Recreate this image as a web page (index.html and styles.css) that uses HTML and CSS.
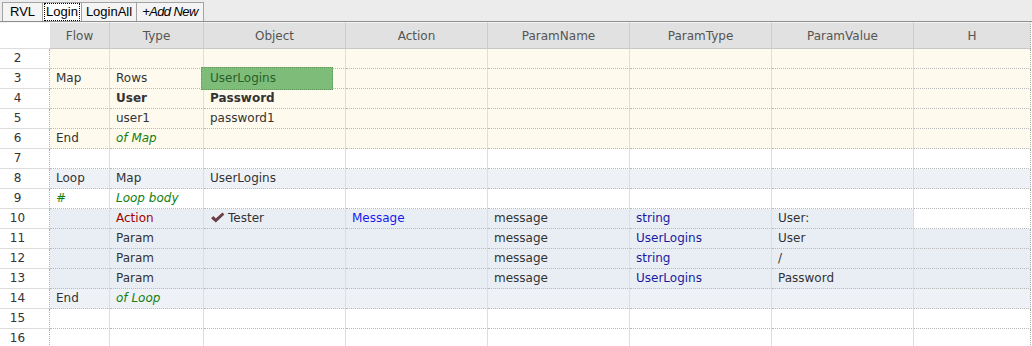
FILE: index.html
```html
<!DOCTYPE html>
<html lang="en">
<head>
    <meta charset="UTF-8">
    <title>Login</title>
    <link rel="stylesheet" href="styles.css">
</head>
<body>
    <div class="tabs">
        <span class="tab">RVL</span>
        <span class="tab active"><span class="focus">Login</span></span>
        <span class="tab">LoginAll</span>
        <span class="tab add">+Add New</span>
    </div>
    <table class="grid">
        <colgroup>
            <col style="width:50px">
            <col style="width:60px">
            <col style="width:94px">
            <col style="width:142px">
            <col style="width:142px">
            <col style="width:142px">
            <col style="width:142px">
            <col style="width:142px">
            <col>
        </colgroup>
        <thead>
            <tr>
                <th class="corner"></th>
                <th>Flow</th>
                <th>Type</th>
                <th>Object</th>
                <th>Action</th>
                <th>ParamName</th>
                <th>ParamType</th>
                <th>ParamValue</th>
                <th>H</th>
            </tr>
        </thead>
        <tbody>
            <tr class="map">
                <td class="num">2</td><td></td><td></td><td></td><td></td><td></td><td></td><td></td><td></td>
            </tr>
            <tr class="map">
                <td class="num">3</td><td>Map</td><td>Rows</td>
                <td class="picked"><div class="highlight"></div><span class="hl-text">UserLogins</span></td>
                <td></td><td></td><td></td><td></td><td></td>
            </tr>
            <tr class="map">
                <td class="num">4</td><td></td><td class="bold">User</td><td class="bold">Password</td><td></td><td></td><td></td><td></td><td></td>
            </tr>
            <tr class="map">
                <td class="num">5</td><td></td><td>user1</td><td>password1</td><td></td><td></td><td></td><td></td><td></td>
            </tr>
            <tr class="map">
                <td class="num">6</td><td>End</td><td class="note">of Map</td><td></td><td></td><td></td><td></td><td></td><td></td>
            </tr>
            <tr>
                <td class="num">7</td><td></td><td></td><td></td><td></td><td></td><td></td><td></td><td></td>
            </tr>
            <tr class="loop">
                <td class="num">8</td><td>Loop</td><td>Map</td><td>UserLogins</td><td></td><td></td><td></td><td></td><td></td>
            </tr>
            <tr>
                <td class="num">9</td><td class="note">#</td><td class="note">Loop body</td><td></td><td></td><td></td><td></td><td></td><td></td>
            </tr>
            <tr class="step">
                <td class="num">10</td><td></td><td class="act">Action</td>
                <td><svg class="check" width="15" height="11" viewBox="0 0 15 11"><path d="M1 6.2 L3.4 4 L5.8 6.6 L12.4 0.6 L14.4 2.6 L5.8 10.4 Z" fill="#6b3d44"/></svg>Tester</td>
                <td class="link">Message</td><td>message</td><td class="type">string</td><td>User:</td><td class="blank"></td>
            </tr>
            <tr class="step">
                <td class="num">11</td><td></td><td>Param</td><td></td><td></td><td>message</td><td class="type">UserLogins</td><td>User</td><td></td>
            </tr>
            <tr class="step">
                <td class="num">12</td><td></td><td>Param</td><td></td><td></td><td>message</td><td class="type">string</td><td>/</td><td></td>
            </tr>
            <tr class="step">
                <td class="num">13</td><td></td><td>Param</td><td></td><td></td><td>message</td><td class="type">UserLogins</td><td>Password</td><td></td>
            </tr>
            <tr class="loop">
                <td class="num">14</td><td>End</td><td class="note">of Loop</td><td></td><td></td><td></td><td></td><td></td><td></td>
            </tr>
            <tr>
                <td class="num">15</td><td></td><td></td><td></td><td></td><td></td><td></td><td></td><td></td>
            </tr>
            <tr>
                <td class="num">16</td><td></td><td></td><td></td><td></td><td></td><td></td><td></td><td></td>
            </tr>
        </tbody>
    </table>
</body>
</html>
```

FILE: styles.css
```css
body {
    margin: 0;
    background-color: #ffffff;
    font-family: "DejaVu Sans", Verdana, sans-serif;
    font-size: 12px;
    color: #333333;
    overflow: hidden;
}

.tabs {
    display: flex;
    align-items: flex-end;
    height: 21px;
    padding-left: 2px;
    background-color: #ececec;
    border-bottom: 1px solid #8e8e8e;
    font-family: "Liberation Sans", Arial, sans-serif;
    font-size: 13px;
    color: #000000;
}

.tab {
    height: 18px;
    line-height: 18px;
    padding: 0 7px;
    background-color: #f4f4f4;
    border: 1px solid #a3a3a3;
    border-bottom: none;
    margin-right: -1px;
}

.tab.active {
    background-color: #ffffff;
    padding: 0 1px;
}

.focus {
    display: inline-block;
    height: 16px;
    line-height: 16px;
    padding: 0 1px;
    border: 1px dotted #000000;
}

.tab.add {
    font-style: italic;
    padding: 0 5px;
    letter-spacing: -0.6px;
}

.tab:nth-child(3) {
    padding: 0 4px;
}

.grid {
    table-layout: fixed;
    width: 1031px;
    border-collapse: separate;
    border-spacing: 0;
}

.grid th {
    height: 25px;
    padding: 0;
    background-color: #e1e1e1;
    color: #555555;
    font-weight: normal;
    border-right: 1px solid #cbcbcb;
    border-bottom: 1px solid #c6c6c6;
    border-top: 1px solid #f4f4f4;
    text-align: center;
}

.grid th.corner {
    background-color: #ffffff;
    border-right: none;
    border-bottom: 1px solid #dddddd;
}

.grid th:last-child {
    border-right: 1px dotted #aaaaaa;
}

.grid td {
    height: 19px;
    line-height: 19px;
    padding: 0 6px;
    white-space: nowrap;
    overflow: hidden;
    border-right: 1px solid #dedede;
    border-bottom: 1px dotted #b9b9b9;
}

.grid td:last-child {
    border-right: 1px dotted #aaaaaa;
}

.grid td.num {
    padding: 0 14px 0 0;
    text-align: center;
    background-color: #ffffff;
    border-right: 1px dotted #b0b0b0;
    border-bottom: 1px solid #dddddd;
    color: #333333;
}

tr.map td {
    background-color: #fffaee;
}

tr.loop td {
    background-color: #eef2f7;
}

tr.step td {
    background-color: #e9eef5;
}

tr.step td.blank {
    background-color: #ffffff;
}

.bold {
    font-weight: bold;
}

.note {
    font-style: italic;
    color: #13800f;
}

.act {
    color: #a00000;
}

.link {
    color: #1a1aee;
}

.type {
    color: #1a1a9e;
}

.check {
    vertical-align: -1px;
    margin-right: 3px;
}

.picked {
    position: relative;
    overflow: visible !important;
}

.highlight {
    position: absolute;
    left: -3px;
    top: -2px;
    width: 130px;
    height: 21px;
    background-color: #7dbd79;
    border: 1px dotted #5e9b5a;
}

.hl-text {
    position: relative;
    color: #2b5d2b;
}
```
